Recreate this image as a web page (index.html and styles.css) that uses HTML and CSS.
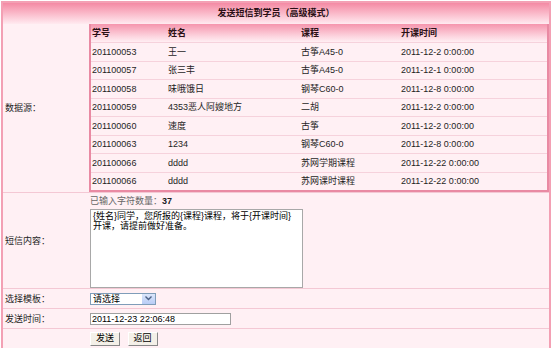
FILE: index.html
```html
<!DOCTYPE html>
<html lang="zh-CN">
<head>
    <meta charset="UTF-8">
    <title>发送短信到学员（高级模式）</title>
    <link rel="stylesheet" href="styles.css">
</head>
<body>
    <div class="panel">
        <div class="title">发送短信到学员（高级模式）</div>
        <table class="form">
            <tr class="row-src">
                <td class="lbl">数据源：</td>
                <td class="fld src">
                    <table class="data">
                        <tr class="head"><th class="c1">学号</th><th class="c2">姓名</th><th class="c3">课程</th><th>开课时间</th></tr>
                        <tr><td>201100053</td><td>王一</td><td>古筝A45-0</td><td>2011-12-2 0:00:00</td></tr>
                        <tr><td>201100057</td><td>张三丰</td><td>古筝A45-0</td><td>2011-12-1 0:00:00</td></tr>
                        <tr><td>201100058</td><td>味哦饿日</td><td>钢琴C60-0</td><td>2011-12-8 0:00:00</td></tr>
                        <tr><td>201100059</td><td>4353恶人阿嫂地方</td><td>二胡</td><td>2011-12-2 0:00:00</td></tr>
                        <tr><td>201100060</td><td>速度</td><td>古筝</td><td>2011-12-2 0:00:00</td></tr>
                        <tr><td>201100063</td><td>1234</td><td>钢琴C60-0</td><td>2011-12-8 0:00:00</td></tr>
                        <tr><td>201100066</td><td>dddd</td><td>苏网学期课程</td><td>2011-12-22 0:00:00</td></tr>
                        <tr><td>201100066</td><td>dddd</td><td>苏网课时课程</td><td>2011-12-22 0:00:00</td></tr>
                    </table>
                </td>
            </tr>
            <tr class="row-msg">
                <td class="lbl">短信内容：</td>
                <td class="fld">
                    <div class="count">已输入字符数量：<b>37</b></div>
                    <textarea class="msg">{姓名}同学，您所报的{课程}课程，将于{开课时间}开课，请提前做好准备。</textarea>
                </td>
            </tr>
            <tr class="row-small">
                <td class="lbl">选择模板：</td>
                <td class="fld">
                    <span class="select-wrap">
                        <select class="tpl"><option>请选择</option></select>
                        <span class="arrow"><svg width="7" height="5" viewBox="0 0 7 5"><path d="M0.5 0.5 L3.5 3.5 L6.5 0.5" fill="none" stroke="#4d6185" stroke-width="1.4"/></svg></span>
                    </span>
                </td>
            </tr>
            <tr class="row-small">
                <td class="lbl">发送时间：</td>
                <td class="fld">
                    <input class="time" type="text" value="2011-12-23 22:06:48">
                </td>
            </tr>
            <tr class="row-small">
                <td class="lbl"></td>
                <td class="fld">
                    <button class="btn">发送</button>
                    <button class="btn">返回</button>
                </td>
            </tr>
        </table>
    </div>
</body>
</html>
```

FILE: styles.css
```css
body {
    margin: 0;
    padding: 1px;
    background: #fff;
    font-family: "Liberation Sans", "Noto Sans CJK SC", sans-serif;
    font-size: 9px;
    color: #1e1e1e;
}
.panel {
    width: 546px;
    border: 2px solid #f3a0b4;
    background: #fff0f4;
}
.title {
    height: 21px;
    line-height: 21px;
    text-align: center;
    font-weight: bold;
    color: #2a1015;
    background: linear-gradient(#f48aa4, #fbc4d2 60%, #ffeaf0);
}
.form {
    width: 100%;
    border-collapse: collapse;
}
.form > tbody > tr > td {
    border-bottom: 1px solid #f4c8d4;
    padding: 0;
    line-height: 12px;
}
.form > tbody > tr:last-child > td {
    border-bottom: none;
}
.lbl {
    width: 84px;
    padding-left: 2px !important;
    vertical-align: middle;
}
.fld {
    padding: 0 0 0 1px !important;
}
.fld.src {
    padding: 0 !important;
}
.row-small > td {
    height: 19px;
}
.data {
    width: 100%;
    border-collapse: collapse;
    border-left: 2px solid #e98aa3;
    border-right: 2px solid #e98aa3;
    border-bottom: 2px solid #e98aa3;
}
.data th, .data td {
    height: 17.5px;
    padding: 0 0 0 1px;
    line-height: 12px;
    text-align: left;
    border-bottom: 1px solid #f6d2dc;
    white-space: nowrap;
}
.data tr:last-child td {
    border-bottom: none;
}
.head th {
    height: 18px;
    background: linear-gradient(#f595ad, #fdd6e0 70%, #ffeef3);
    color: #2a1015;
}
.c1 { width: 75px; }
.c2 { width: 132px; }
.c3 { width: 99px; }
.count {
    height: 16px;
    line-height: 16px;
    color: #666;
}
.count b {
    color: #222;
}
.msg {
    display: block;
    width: 213px;
    height: 79px;
    margin: 0;
    padding: 1px 2px;
    box-sizing: border-box;
    border: 1px solid #a8a8a8;
    font-family: inherit;
    font-size: 9px;
    line-height: 10px;
    resize: none;
    overflow-y: scroll;
}
.msg::-webkit-scrollbar {
    width: 11px;
}
.msg::-webkit-scrollbar-track {
    background: #f6f6f2;
    border-left: 1px solid #ececea;
}
.select-wrap {
    position: relative;
    display: inline-block;
    vertical-align: middle;
}
.tpl {
    appearance: none;
    display: block;
    width: 66px;
    height: 12px;
    padding: 0 0 0 2px;
    margin: 0;
    font-family: inherit;
    font-size: 9px;
    line-height: 10px;
    border: 1px solid #7f9db9;
    background: #fff;
}
.arrow {
    position: absolute;
    right: 1px;
    top: 1px;
    width: 13px;
    height: 10px;
    display: flex;
    align-items: center;
    justify-content: center;
    background: linear-gradient(#dbe6fb, #b8cdf6);
    pointer-events: none;
}
.time {
    width: 141px;
    height: 12px;
    box-sizing: border-box;
    padding: 0 1px;
    margin: 0;
    vertical-align: middle;
    border: 1px solid #a0a0a0;
    font-family: inherit;
    font-size: 9px;
}
.btn {
    height: 14px;
    padding: 0 5px;
    margin: 0 5px 0 0;
    vertical-align: middle;
    font-family: inherit;
    font-size: 9px;
    line-height: 11px;
    background: #f4f0e8;
    border: 1px solid;
    border-color: #fff #888 #888 #fff;
}
```
